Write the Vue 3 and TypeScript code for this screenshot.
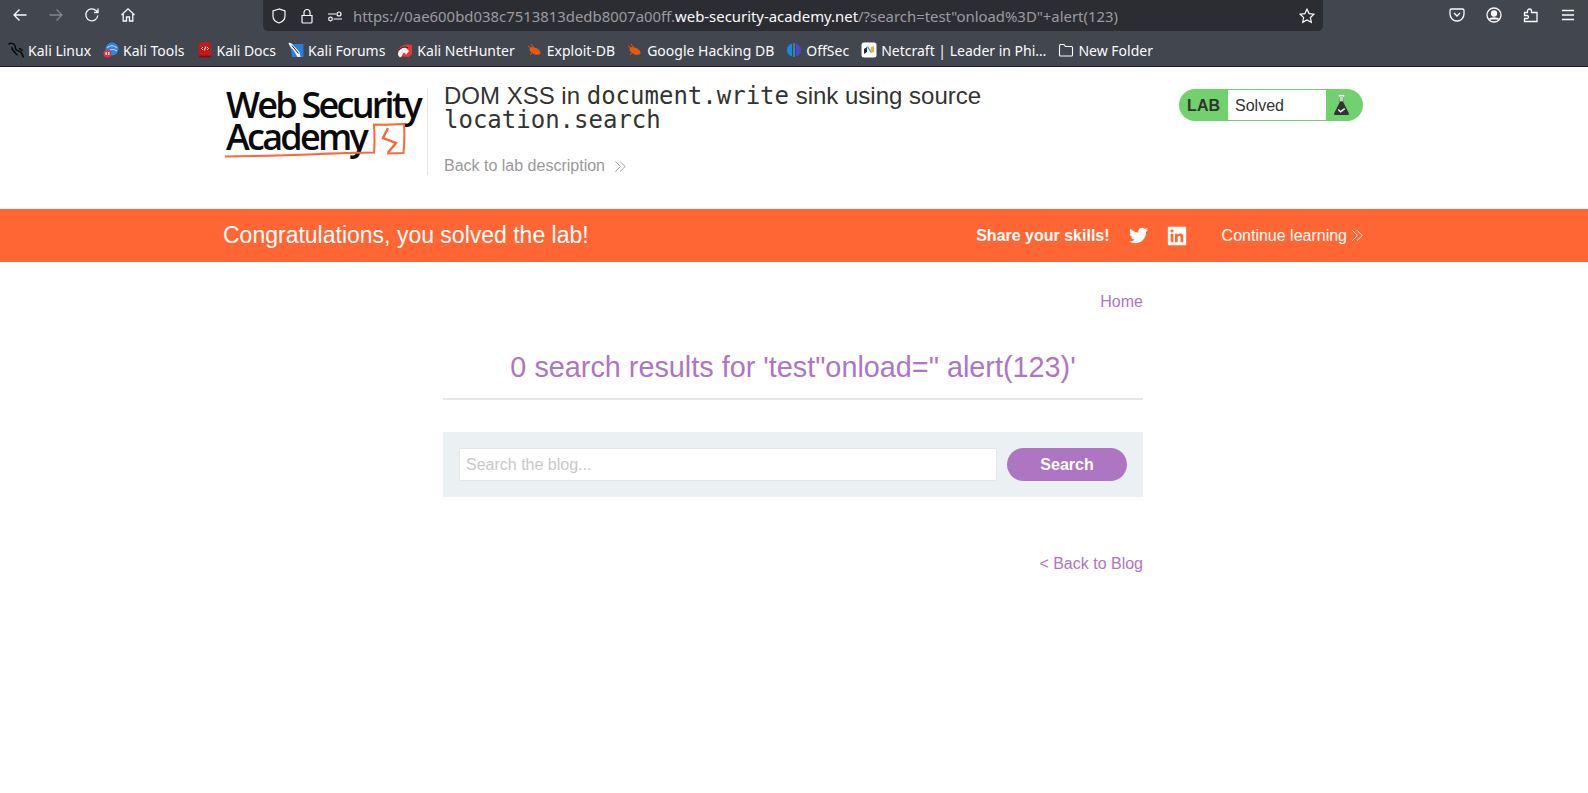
<script setup lang="ts">
interface Bookmark {
  label: string
  kind: string
}

const bookmarks: Bookmark[] = [
  { label: 'Kali Linux', kind: 'dragon' },
  { label: 'Kali Tools', kind: 'tools' },
  { label: 'Kali Docs', kind: 'docs' },
  { label: 'Kali Forums', kind: 'forums' },
  { label: 'Kali NetHunter', kind: 'hunter' },
  { label: 'Exploit-DB', kind: 'bug' },
  { label: 'Google Hacking DB', kind: 'bug' },
  { label: 'OffSec', kind: 'offsec' },
  { label: 'Netcraft | Leader in Phi…', kind: 'netcraft' },
  { label: 'New Folder', kind: 'folder' }
]
</script>

<template>
  <div class="page">
    <div class="browser">
      <div class="toolbar">
        <div class="nav">
          <svg class="tb" viewBox="0 0 16 16"><path d="M14.500 8H2M7.500 2.500 2 8l5.500 5.500" /></svg>
          <svg class="tb dim" viewBox="0 0 16 16"><path d="M1.500 8H14M8.500 2.500 14 8l-5.500 5.500" /></svg>
          <svg class="tb" viewBox="0 0 16 16"><path d="M13.800 8.500A6 6 0 1 1 12 3.500L14 5.500M14 1.500v4h-4" /></svg>
          <svg class="tb" viewBox="0 0 16 16"><path d="M1.500 8 8 1.800 14.500 8M3.200 7v7h3.300v-4h3v4h3.300V7" /></svg>
        </div>
        <div class="urlbar">
          <svg class="ub" viewBox="0 0 16 16"><path d="M8 1 2 3v5c0 3.500 3 6 6 7 3-1 6-3.500 6-7V3z" /></svg>
          <svg class="ub" viewBox="0 0 16 16"><path d="M3 7.500h10V14a1 1 0 0 1-1 1H4a1 1 0 0 1-1-1zM5 7.500V4.500a3 3 0 0 1 6 0v3" /></svg>
          <svg class="ub" viewBox="0 0 16 16"><path d="M1 6h8M6.500 11H15" /><circle cx="12" cy="6" r="2" /><circle cx="3.500" cy="11" r="1.800" /></svg>
          <div class="url">https://0ae600bd038c7513813dedb8007a00ff.<span class="host">web-security-academy.net</span>/?search=test"onload%3D"+alert(123)</div>
          <svg class="ub star" viewBox="0 0 16 16"><path d="m8 1.200 2.100 4.400 4.800.6-3.500 3.300.9 4.800L8 12l-4.300 2.300.9-4.800L1.100 6.200l4.800-.6z" /></svg>
        </div>
        <div class="right-tools">
          <svg class="tb" viewBox="0 0 16 16"><path d="M2.500 2h11A1.500 1.500 0 0 1 15 3.500V7a7 7 0 0 1-14 0V3.500A1.500 1.500 0 0 1 2.500 2zM5 6l3 3 3-3" /></svg>
          <svg class="tb" viewBox="0 0 16 16"><circle cx="8" cy="8" r="7" /><circle cx="8" cy="6.500" r="2.500" class="solid" /><path d="M3.500 12.500c1-2 8-2 9 0" class="solid" /></svg>
          <svg class="tb" viewBox="0 0 16 16"><path d="M1.500 8.500V5.500h3V4a2 2 0 0 1 4 0v1.500h5.500v9H1.500v-3H4a1.500 1.500 0 0 0 0-3z" /></svg>
          <svg class="tb" viewBox="0 0 16 16"><path d="M2 3.500h12M2 8h12M2 12.500h12" /></svg>
        </div>
      </div>
      <div class="bookmarks">
        <div v-for="b in bookmarks" :key="b.label" class="bookmark">
          <svg class="fav" viewBox="0 0 16 16">
            <template v-if="b.kind === 'dragon'">
              <path d="M.5 2.500C2 .8 4.500.8 6.500 2.800 8 4.300 6.500 6 8 7.500s4 1 5.500 3.500c1 1.500 1.500 3 2 4.500M4 5c-.8 1.800.8 3 2 4.500s2.500 3 3.500 3.500M11 6.500c1.500.3 3 1.300 3.500 2.500" fill="none" stroke="#0b0b0b" stroke-width="1.600" />
            </template>
            <template v-else-if="b.kind === 'tools'">
              <circle cx="9" cy="7" r="6.500" fill="#2f86e0" />
              <path d="M4 6c3-3 7-3 10 0M6 9c2-2 5-2 8 0" stroke="#cfe6ff" fill="none" />
              <circle cx="4.500" cy="11.500" r="4" fill="#e5323a" />
              <path d="M3.200 10v3M5.800 10v3" stroke="#fff" stroke-width="1.200" />
            </template>
            <template v-else-if="b.kind === 'docs'">
              <rect x="2" y="0.500" width="12" height="15" rx="1" fill="#c8161d" />
              <rect x="2" y="13.500" width="12" height="2" fill="#7e1015" />
              <path d="M6 5 4.500 6.500 6 8M10 5l1.500 1.500L10 8M8.700 4.500 7.300 8.500" stroke="#fff" fill="none" />
            </template>
            <template v-else-if="b.kind === 'forums'">
              <path d="M2 2h13.500v13H4z" fill="#2a7de1" />
              <path d="M.5 1c1.500-.5 3 .5 4 1.500l7 7.500 1 5h-3L5 7.500C3 6 1 3 .5 1z" fill="#f5f5f5" />
              <path d="M4 3.500l6.500 8" stroke="#222" />
            </template>
            <template v-else-if="b.kind === 'hunter'">
              <path d="M1 10C2 4 7 1 15 3v9l-3 3-6-.5L2 15z" fill="#e8343b" />
              <path d="M1 13c0-5 4-8 8-7l3 3-3 4c-1-3-3-3-4 1l-2 1.500z" fill="#f5f5f5" />
              <path d="M2 8c3-3 6-4 9-2" stroke="#222" fill="none" />
            </template>
            <template v-else-if="b.kind === 'bug'">
              <ellipse cx="8" cy="9" rx="6" ry="3.200" transform="rotate(25 8 9)" fill="#e8590c" />
              <path d="M1 4l5 3M4 2l3 4M3 13l3-3M9 13l1-2" stroke="#e8590c" />
            </template>
            <template v-else-if="b.kind === 'offsec'">
              <path d="M6 1.500C3 2.500 1 5 1 8s2 5.500 5 6.500z" fill="#1e88d8" />
              <path d="M10 1.500c3 1 5 3.500 5 6.500s-2 5.500-5 6.500z" fill="#4d46c8" />
              <path d="M7.300 1h1.400v14H7.300z" fill="#2a9fe0" />
            </template>
            <template v-else-if="b.kind === 'netcraft'">
              <rect x="0.500" y="0.500" width="15" height="15" rx="2.500" fill="#fff" />
              <path d="M3 12V7l3-2v5z" fill="#1b2a4a" />
              <path d="M6 5l4 6v-2L7 4z" fill="#2ba4e0" />
              <path d="M10 11V5l3-1v6z" fill="#e8b422" />
            </template>
            <template v-else>
              <path d="M1.500 13V3.500a1 1 0 0 1 1-1h3.500l1.500 2h6a1 1 0 0 1 1 1V13a1 1 0 0 1-1 1h-11a1 1 0 0 1-1-1z" fill="none" stroke="#fbfbfe" stroke-width="1.100" />
            </template>
          </svg>
          <span>{{ b.label }}</span>
        </div>
      </div>
    </div>

    <header class="lab-header">
      <div class="logo">
        <div class="logo-text">Web Security<br />Academy</div>
        <svg class="logo-mark" viewBox="0 0 204 72">
          <path d="M1 68.500c50-.5 90-2.500 121-3.500l28-.5c1-9 .5-19 0-28 10 .5 20 0 30-.5.500 9 .5 19-.5 29l-16.500.5" fill="none" stroke="#ff6633" stroke-width="2" />
          <path d="M164 40l-5 10 13 5-8 9.500" fill="none" stroke="#ff6633" stroke-width="2.400" />
        </svg>
      </div>
      <div class="title-block">
        <h2>DOM XSS in <code>document.write</code> sink using source <code>location.search</code></h2>
        <a class="back">Back to lab description
          <svg class="chev" viewBox="0 0 14 14"><path d="M1.500 1.500 7 7l-5.500 5.500M6.500 1.500 12 7l-5.500 5.500" /></svg>
        </a>
      </div>
      <div class="status">
        <span class="status-lab">LAB</span>
        <span class="status-text">Solved</span>
        <span class="status-icon">
          <svg viewBox="1.500 0 17 24" width="17" height="22">
            <rect x="7" y="1" width="6" height="2" fill="#fff" />
            <path d="M8 3h4v6l6 12a1.500 1.500 0 0 1-1.500 2h-13A1.500 1.500 0 0 1 2 21L8 9z" fill="#333332" />
            <path d="M8 3h4v5H8z" fill="#cfcfcf" />
            <path d="m6.500 17 2.500 2.500 4.500-3.500" fill="none" stroke="#fff" stroke-width="1.500" />
          </svg>
        </span>
      </div>
    </header>

    <div class="banner">
      <div class="banner-inner">
        <div class="congrats">Congratulations, you solved the lab!</div>
        <div class="share">
          <strong>Share your skills!</strong>
          <svg class="twitter" viewBox="0 0 24 24"><path d="M23.950 4.570a10 10 0 0 1-2.820.77 4.960 4.960 0 0 0 2.160-2.720c-.95.550-2 .96-3.130 1.190a4.920 4.920 0 0 0-8.380 4.480C7.690 8.090 4.070 6.130 1.640 3.160a4.820 4.820 0 0 0-.66 2.470c0 1.710.87 3.210 2.190 4.100a4.900 4.900 0 0 1-2.230-.62v.06a4.920 4.920 0 0 0 3.950 4.830 5 5 0 0 1-2.210.08 4.940 4.940 0 0 0 4.600 3.420A9.870 9.870 0 0 1 0 19.540a14 14 0 0 0 7.560 2.210c9.050 0 14-7.500 14-13.980 0-.21 0-.42-.02-.63a9.940 9.940 0 0 0 2.460-2.550z" /></svg>
          <svg class="linkedin" viewBox="0 0 24 24"><path d="M21.500 1h-19A1.500 1.500 0 0 0 1 2.500v19A1.500 1.500 0 0 0 2.500 23h19a1.500 1.500 0 0 0 1.500-1.500v-19A1.500 1.500 0 0 0 21.500 1zM7.600 19.500H4.400V9.300h3.200zM6 7.900a1.900 1.900 0 1 1 0-3.800 1.900 1.900 0 0 1 0 3.800zm13.500 11.600h-3.200v-5c0-1.200 0-2.700-1.600-2.700s-1.900 1.300-1.900 2.600v5.100H9.600V9.300h3v1.400c.5-.8 1.500-1.700 3.200-1.700 3.300 0 3.700 2.200 3.700 5z" /></svg>
        </div>
        <a class="continue">Continue learning
          <svg class="chev white" viewBox="0 0 14 14"><path d="M1.500 1.500 7 7l-5.500 5.500M6.500 1.500 12 7l-5.500 5.500" /></svg>
        </a>
      </div>
    </div>

    <main class="content">
      <div class="home-row"><a>Home</a></div>
      <h1>0 search results for 'test"onload=" alert(123)'</h1>
      <hr />
      <form class="search" @submit.prevent>
        <input type="text" placeholder="Search the blog..." />
        <button type="submit">Search</button>
      </form>
      <div class="back-row"><a>&lt; Back to Blog</a></div>
    </main>
  </div>
</template>

<style scoped>
.page {
  width: 1588px;
  height: 793px;
  overflow: hidden;
  background: #fff;
  font-family: "Liberation Sans", Arial, sans-serif;
  color: #333332;
}

.browser {
  background: #42464e;
  border-bottom: 1px solid #1c1b22;
  height: 66px;
  box-sizing: content-box;
}

.toolbar {
  display: flex;
  height: 31px;
  align-items: flex-start;
}

.nav {
  display: flex;
  width: 263px;
  padding: 7px 0 0 12px;
  gap: 20px;
  box-sizing: border-box;
}

.tb {
  width: 16px;
  height: 16px;
  fill: none;
  stroke: #fbfbfe;
  stroke-width: 1.300;
  flex: none;
}

.tb.dim {
  stroke: #85868c;
}

.tb .solid {
  fill: #fbfbfe;
}

.urlbar {
  width: 1060px;
  height: 31px;
  background: #2c2d32;
  border-radius: 0 0 5px 5px;
  display: flex;
  align-items: center;
  box-sizing: border-box;
  padding: 0 8px;
  gap: 12px;
}

.ub {
  width: 16px;
  height: 16px;
  fill: none;
  stroke: #fbfbfe;
  stroke-width: 1.200;
  flex: none;
}

.url {
  flex: 1;
  font-family: "Noto Sans", sans-serif;
  font-size: 14.900px;
  color: #9b9ba0;
  white-space: nowrap;
  overflow: hidden;
  margin-left: -2px;
}

.host {
  color: #fbfbfe;
}

.right-tools {
  display: flex;
  gap: 21px;
  margin-left: 126px;
  padding-top: 7px;
}

.bookmarks {
  display: flex;
  height: 35px;
  align-items: center;
  box-sizing: border-box;
  padding: 3px 0 0 8px;
  gap: 12px;
  font-family: "Noto Sans", sans-serif;
  font-size: 14px;
  color: #fbfbfe;
}

.bookmark {
  display: flex;
  align-items: center;
  gap: 4px;
  white-space: nowrap;
}

.fav {
  width: 16px;
  height: 16px;
  flex: none;
}

.lab-header {
  display: flex;
  height: 142px;
  width: 1140px;
  margin-left: 223px;
  box-sizing: border-box;
  padding-top: 21px;
}

.logo {
  width: 199px;
  height: 72px;
  position: relative;
  flex: none;
  margin-right: 5px;
}

.logo-text {
  font-family: "Open Sans", sans-serif;
  font-size: 36px;
  line-height: 32px;
  letter-spacing: -2.750px;
  color: #0a0a0a;
  white-space: nowrap;
  font-weight: 600;
  margin: 1px 0 0 3px;
}

.logo-mark {
  position: absolute;
  left: 1px;
  top: 0;
  width: 204px;
  height: 72px;
}

.title-block {
  border-left: 1px solid #e6e6e6;
  height: 87px;
  width: 700px;
  box-sizing: border-box;
  padding-left: 16px;
}

h2 {
  margin: -4px 0 0;
  font-size: 24px;
  font-weight: 400;
  line-height: 24px;
  color: #333332;
}

code {
  font-family: "DejaVu Sans Mono", monospace;
  font-size: 24px;
}

.back {
  display: flex;
  align-items: center;
  gap: 9px;
  margin-top: 25px;
  font-size: 16px;
  color: #999;
}

.chev {
  width: 13px;
  height: 13px;
  fill: none;
  stroke: #999;
  stroke-width: 1;
}

.chev.white {
  stroke: #fff;
}

.status {
  margin-left: auto;
  width: 184px;
  height: 32px;
  background: #70d16d;
  border-radius: 16px;
  display: flex;
  align-items: stretch;
  margin-top: 1px;
  flex: none;
}

.status-lab {
  width: 49px;
  font-weight: 700;
  font-size: 16px;
  line-height: 34px;
  text-align: right;
  padding-right: 8px;
  box-sizing: border-box;
}

.status-text {
  width: 98px;
  margin: 1px 0;
  background: #fff;
  font-size: 16px;
  line-height: 32px;
  padding-left: 7px;
  box-sizing: border-box;
}

.status-icon {
  display: flex;
  align-items: center;
  padding-left: 7px;
}

.banner {
  background: #ff6633;
  height: 53px;
  color: #fff;
}

.banner-inner {
  width: 1141px;
  height: 53px;
  margin-left: 223px;
  display: flex;
  align-items: center;
}

.congrats {
  font-size: 23px;
  flex: 1;
}

.share {
  display: flex;
  align-items: center;
  font-size: 16px;
}

.twitter {
  width: 19px;
  height: 19px;
  fill: #fff;
  margin-left: 19px;
}

.linkedin {
  width: 20px;
  height: 20px;
  fill: #fff;
  margin-left: 19px;
}

.continue {
  display: flex;
  align-items: center;
  gap: 4px;
  font-size: 16px;
  margin-left: 35px;
}

.content {
  width: 700px;
  margin-left: 443px;
  color: #ae75c3;
}

.home-row {
  text-align: right;
  font-size: 16px;
  padding-top: 31px;
  line-height: 18px;
}

h1 {
  margin: 38px 0 0;
  font-size: 28.800px;
  font-weight: 400;
  line-height: 36px;
  text-align: center;
}

hr {
  border: 0;
  border-top: 2px solid #e6e6e6;
  margin: 13px 0 32px;
}

.search {
  background: #ebf0f2;
  height: 65px;
  padding: 16px;
  box-sizing: border-box;
  display: flex;
  gap: 10px;
}

input {
  flex: 1;
  height: 33px;
  box-sizing: border-box;
  border: 1px solid #e6e6e6;
  background: #fff;
  font-family: inherit;
  font-size: 16px;
  padding: 0 6px;
  outline: none;
}

input::placeholder {
  color: #c8c8c8;
}

button {
  width: 120px;
  height: 33px;
  border: 0;
  border-radius: 17px;
  background: #ae75c3;
  color: #fff;
  font-family: inherit;
  font-size: 16px;
  font-weight: 700;
}

.back-row {
  text-align: right;
  font-size: 16px;
  line-height: 18px;
  margin-top: 58px;
}
</style>

<style>
html,
body {
  margin: 0;
  background: #fff;
}
</style>
